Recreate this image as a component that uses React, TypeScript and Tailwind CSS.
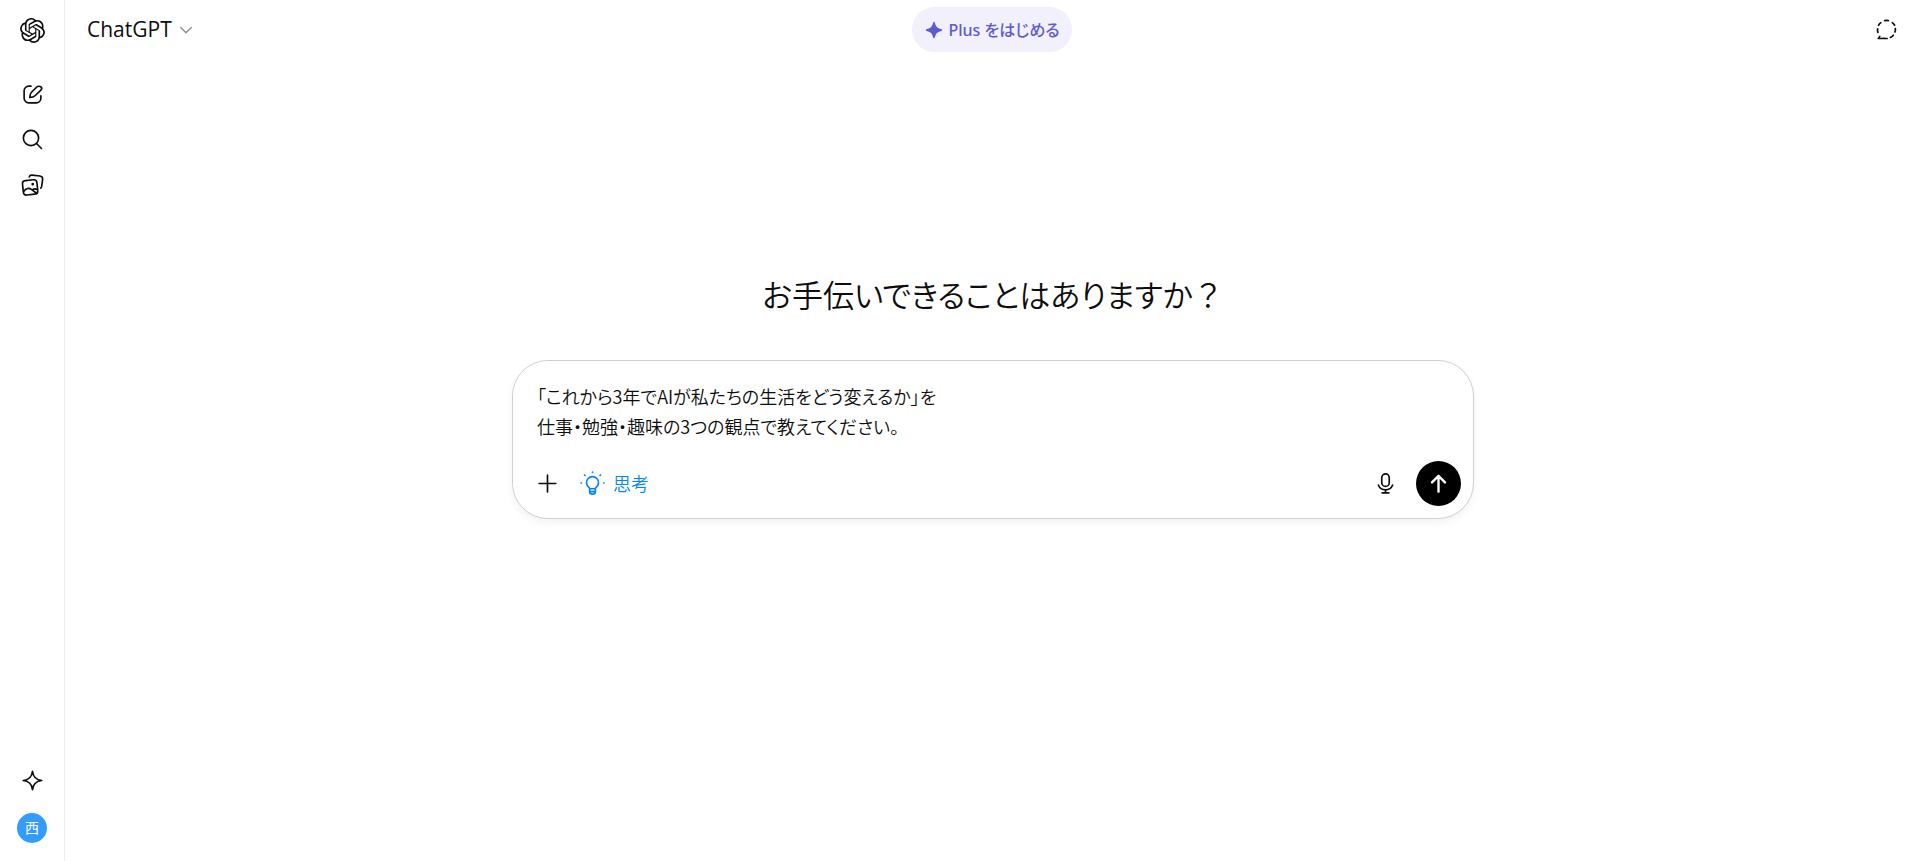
import React, { useState } from 'react'
import { SiOpenai } from 'react-icons/si'

interface IconProps {
  children: React.ReactNode;
  className?: string;
}

// shared 20x20 outline icon
const Icon = ({ children, className = 'size-[25px]' }: IconProps) => (
  <svg
    viewBox="0 0 20 20"
    fill="none"
    stroke="currentColor"
    strokeWidth="1.33"
    strokeLinecap="round"
    strokeLinejoin="round"
    aria-hidden="true"
    className={className}
  >
    {children}
  </svg>
)

const EditIcon = () => (
  <Icon>
    <path d="M8.800 3.300H7a3.700 3.700 0 0 0-3.700 3.700v6a3.700 3.700 0 0 0 3.700 3.700h6a3.700 3.700 0 0 0 3.700-3.700v-2" />
    <path d="M13.400 4 9.200 8.200c-1 1-1.300 2-1.400 4.200 2.200-.1 3.200-.4 4.200-1.400l4.700-4.500c.8-.8.8-1.900.1-2.600-.7-.7-2.600-.7-3.400.1z" />
  </Icon>
)

const SearchIcon = () => (
  <Icon>
    <circle cx="8.8" cy="8.8" r="6.1" />
    <path d="m13.2 13.2 4 4" />
  </Icon>
)

const LibraryIcon = () => (
  <Icon>
    <path d="M7.400 3.900C7.700 2.800 8.300 2.400 9.600 2.500l6.300.7c1.600.2 2.400 1.100 2.200 2.700l-.7 5.300c-.1.8-.3 1.300-.8 1.700" />
    <g transform="rotate(-6 8.200 12.200)">
      <rect x="2.300" y="6.500" width="11.600" height="11.600" rx="2.600" />
      <path d="M2.600 15c2.200-2.500 4.400-2.700 6.300-1l4 3.700M9.700 14.500c1.200-.9 2.600-.8 3.900.2" />
      <circle cx="10.400" cy="10" r="1.100" fill="currentColor" stroke="none" />
    </g>
  </Icon>
)

const SparkleIcon = () => (
  <Icon>
    <path d="M10 2.600c.5 4.800 2.600 6.900 7.400 7.400-4.800.5-6.900 2.600-7.400 7.400-.5-4.800-2.600-6.900-7.400-7.400 4.800-.5 6.900-2.600 7.400-7.400z" />
  </Icon>
)

const TempChatIcon = () => (
  <Icon>
    <path d="M8.500 2.900c1-.2 2-.2 3 0M14.600 4.500c.8.6 1.400 1.300 1.900 2.100M17.100 9.200c.1 1 0 1.900-.3 2.800M15.500 14.600c-.7.8-1.500 1.400-2.400 1.800M10.500 17.200c-.8.1-1.500 0-2.300-.2-1.500.1-3.100.2-4.800.2l1.200-1.600M3.200 12.300c-.4-1-.5-1.900-.3-2.900M3.600 6.700c.5-.9 1.100-1.600 1.900-2.200" />
  </Icon>
)

const BulbIcon = () => (
  <Icon>
    <path d="M7.800 14.200c0-.5-.3-.8-.7-1.100a4.800 4.800 0 1 1 5.800 0c-.4.3-.7.6-.7 1.100zM7.700 14.300v2.200c0 1.200.9 2 2.300 2s2.300-.8 2.300-2v-2.200M7.900 16.500h4.200" />
    <path d="M10 .8v.4M3.600 3.200l.4.400M16.400 3.200l-.4.400M.8 9.600h.4M18.800 9.600h.4" />
  </Icon>
)

const MicIcon = () => (
  <Icon>
    <rect x="7" y="2.300" width="6" height="10" rx="3" />
    <path d="M4.300 11.200c.9 2.400 3 3.900 5.700 3.900s4.800-1.500 5.700-3.900M10 15.200v2.300M7.300 17.500h5.400" />
  </Icon>
)

const Sidebar = () => {
  const items = [
    { label: '新しいチャット', icon: <EditIcon /> },
    { label: 'チャットを検索', icon: <SearchIcon /> },
    { label: 'ライブラリ', icon: <LibraryIcon /> },
  ]
  return (
    <nav className="flex w-[65px] shrink-0 flex-col items-center border-r border-[#ededed] pt-2 pb-[11px]">
      <a href="#" aria-label="ChatGPT" className="flex size-11 items-center justify-center">
        <SiOpenai className="size-[25px]" />
      </a>
      <div className="mt-5 flex flex-col">
        {items.map((item) => (
          <button key={item.label} aria-label={item.label} className="flex h-[45px] w-11 items-center justify-center">
            {item.icon}
          </button>
        ))}
      </div>
      <div className="mt-auto flex flex-col items-center gap-1">
        <button aria-label="アップグレード" className="flex size-11 items-center justify-center">
          <SparkleIcon />
        </button>
        <button aria-label="アカウント" className="flex size-11 items-center justify-center">
          <span className="flex size-[30px] items-center justify-center rounded-full bg-[#339cff] text-sm text-white">西</span>
        </button>
      </div>
    </nav>
  )
}

const Header = () => (
  <header className="grid h-[59px] grid-cols-3 items-center pr-2 pl-[10px]">
    <button className="flex items-center gap-1 justify-self-start px-3 text-[21px]">
      ChatGPT
      <Icon className="size-5 text-[#8f8f8f]">
        <path d="m4.700 7.500 5.300 5.300 5.300-5.300" />
      </Icon>
    </button>
    <button className="flex h-[45px] items-center gap-1 justify-self-center rounded-full bg-[#f1f0fb] px-3 font-['Noto_Sans','Noto_Sans_CJK_JP',sans-serif] text-base font-medium text-[#5d5bd0]">
      <svg viewBox="0 0 20 20" fill="currentColor" aria-hidden="true" className="size-5">
        <path d="M10 1.800c.4 0 .7.300.9.900 1.100 4.100 2.200 5.300 6.400 6.400.6.200.9.500.9.900s-.3.700-.9.900c-4.200 1.100-5.300 2.300-6.400 6.400-.2.600-.5.900-.9.900s-.7-.3-.9-.9c-1.100-4.100-2.200-5.300-6.400-6.400-.6-.2-.9-.5-.9-.9s.3-.7.9-.9c4.200-1.100 5.300-2.300 6.400-6.400.2-.6.500-.9.900-.9z" />
      </svg>
      Plus をはじめる
    </button>
    <button aria-label="一時チャット" className="flex size-11 items-center justify-center justify-self-end">
      <TempChatIcon />
    </button>
  </header>
)

const Composer = () => {
  const [prompt, setPrompt] = useState('「これから3年でAIが私たちの生活をどう変えるか」を\n仕事・勉強・趣味の3つの観点で教えてください。')

  return (
    <form
      onSubmit={(e) => e.preventDefault()}
      className="w-full max-w-[962px] rounded-[36px] border border-[#d0d0d0] bg-white p-3 shadow-[0_4px_8px_rgba(0,0,0,0.05)]"
    >
      <textarea
        aria-label="プロンプト"
        rows={2}
        value={prompt}
        onChange={(e) => setPrompt(e.target.value)}
        className="mt-2 block w-full resize-none overflow-hidden px-3 font-['Noto_Sans_CJK_JP',sans-serif] text-lg leading-[30px] font-[350] outline-none"
      />
      <div className="mt-5 flex h-[45px] items-center">
        <button type="button" aria-label="追加" className="flex size-[45px] items-center justify-center">
          <Icon>
            <path d="M10 3.300v13.400M3.300 10h13.400" />
          </Icon>
        </button>
        <button type="button" className="flex h-[45px] items-center gap-2 px-[10px] text-lg font-[350] text-[#0285ff]">
          <BulbIcon />
          思考
        </button>
        <button type="button" aria-label="音声入力" className="mr-2 ml-auto flex size-[45px] items-center justify-center">
          <MicIcon />
        </button>
        <button type="submit" aria-label="送信" className="flex size-[45px] items-center justify-center rounded-full bg-black text-white">
          <svg viewBox="0 0 20 20" fill="none" stroke="currentColor" strokeWidth="1.9" strokeLinecap="round" strokeLinejoin="round" aria-hidden="true" className="size-[25px]">
            <path d="M10 16.500V4.200M4.800 9.100 10 3.900l5.200 5.200" />
          </svg>
        </button>
      </div>
    </form>
  )
}

const App = () => {
  return (
    <div
      lang="ja"
      className="flex min-h-screen bg-white font-['Open_Sans','Noto_Sans_CJK_JP',sans-serif] text-[#0d0d0d] [font-feature-settings:'palt']"
    >
      <Sidebar />
      <div className="flex min-w-0 flex-1 flex-col">
        <Header />
        <main className="flex flex-1 flex-col items-center pt-[212px] pr-5 pl-6">
          <h1 className="mb-[41px] text-[31px] leading-12 font-[350]">
            お手伝いできることはありますか<span className="[font-feature-settings:normal]">？</span>
          </h1>
          <Composer />
        </main>
      </div>
    </div>
  )
}

export default App
